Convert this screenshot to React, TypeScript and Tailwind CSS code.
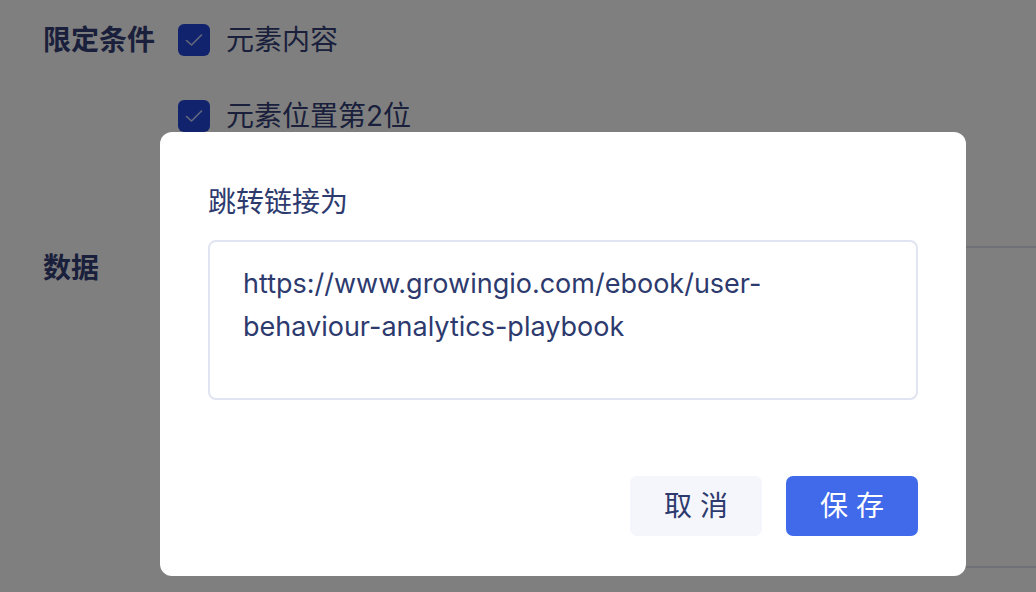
import { useState } from "react"

const FONT = "font-['Inter','Noto_Sans_CJK_SC',sans-serif]"

type CheckProps = {
  label: string
  checked: boolean
  onToggle: () => void
}

const CheckItem = ({ label, checked, onToggle }: CheckProps) => (
  <button type="button" onClick={onToggle} className="flex h-[40px] items-center gap-[16px]">
    <span
      className={
        checked
          ? "flex h-[32px] w-[32px] items-center justify-center rounded-[6px] bg-[#2547dc]"
          : "flex h-[32px] w-[32px] items-center justify-center rounded-[6px] border-2 border-[#d5d9e8] bg-white"
      }
    >
      {checked && (
        <svg width="18" height="14" viewBox="0 0 18 14" fill="none">
          <path d="M1.5 7.5L6.5 12L16.5 2" stroke="#ffffff" strokeOpacity="0.75" strokeWidth="1.6" strokeLinecap="round" strokeLinejoin="round" />
        </svg>
      )}
    </span>
    <span className="text-[28px] leading-[40px] text-[#343f78]">{label}</span>
  </button>
)

const App = () => {
  const [content, setContent] = useState(true)
  const [position, setPosition] = useState(true)
  const [url, setUrl] = useState(
    "https://www.growingio.com/ebook/user-behaviour-analytics-playbook"
  )

  return (
    <div className={`relative h-[592px] w-[1036px] overflow-hidden bg-white ${FONT}`}>
      {/* page behind the dialog */}
      <div className="flex flex-col pl-[43px] pt-[20px]">
        <div className="flex items-start">
          <div className="w-[135px] text-[28px] font-semibold leading-[40px] text-[#343f78]">
            限定条件
          </div>
          <div className="flex flex-col gap-[36px]">
            <CheckItem label="元素内容" checked={content} onToggle={() => setContent(!content)} />
            <CheckItem label="元素位置第2位" checked={position} onToggle={() => setPosition(!position)} />
          </div>
        </div>
        <div className="mt-[110px] flex items-start">
          <div className="mt-[2px] w-[135px] text-[28px] font-semibold leading-[40px] text-[#343f78]">
            数据
          </div>
          <div className="h-[322px] flex-1 border-y-2 border-l-2 border-[#e0e1ee]" />
        </div>
      </div>

      {/* dialog */}
      <div className="absolute inset-0 bg-black/50">
        <div className="absolute left-[160px] top-[132px] flex h-[444px] w-[806px] flex-col rounded-[12px] bg-white px-[48px] pb-[40px] pt-[50px]">
          <div className="text-[28px] leading-[40px] text-[#2d3a6e]">跳转链接为</div>
          <textarea
            value={url}
            onChange={(e) => setUrl(e.target.value)}
            className="mt-[18px] h-[160px] w-full resize-none rounded-[8px] border-2 border-[#e1e4f1] px-[33px] pt-[20px] text-[27px] leading-[43px] text-[#2d3a6e] outline-none"
          />
          <div className="mt-auto flex justify-end gap-[24px]">
            <button type="button" className="h-[60px] w-[132px] rounded-[7px] bg-[#f5f6fb] text-[28px] text-[#2d3a6e]">
              取 消
            </button>
            <button type="button" className="h-[60px] w-[132px] rounded-[7px] bg-[#416aeb] text-[28px] text-white">
              保 存
            </button>
          </div>
        </div>
      </div>
    </div>
  )
}

export default App
